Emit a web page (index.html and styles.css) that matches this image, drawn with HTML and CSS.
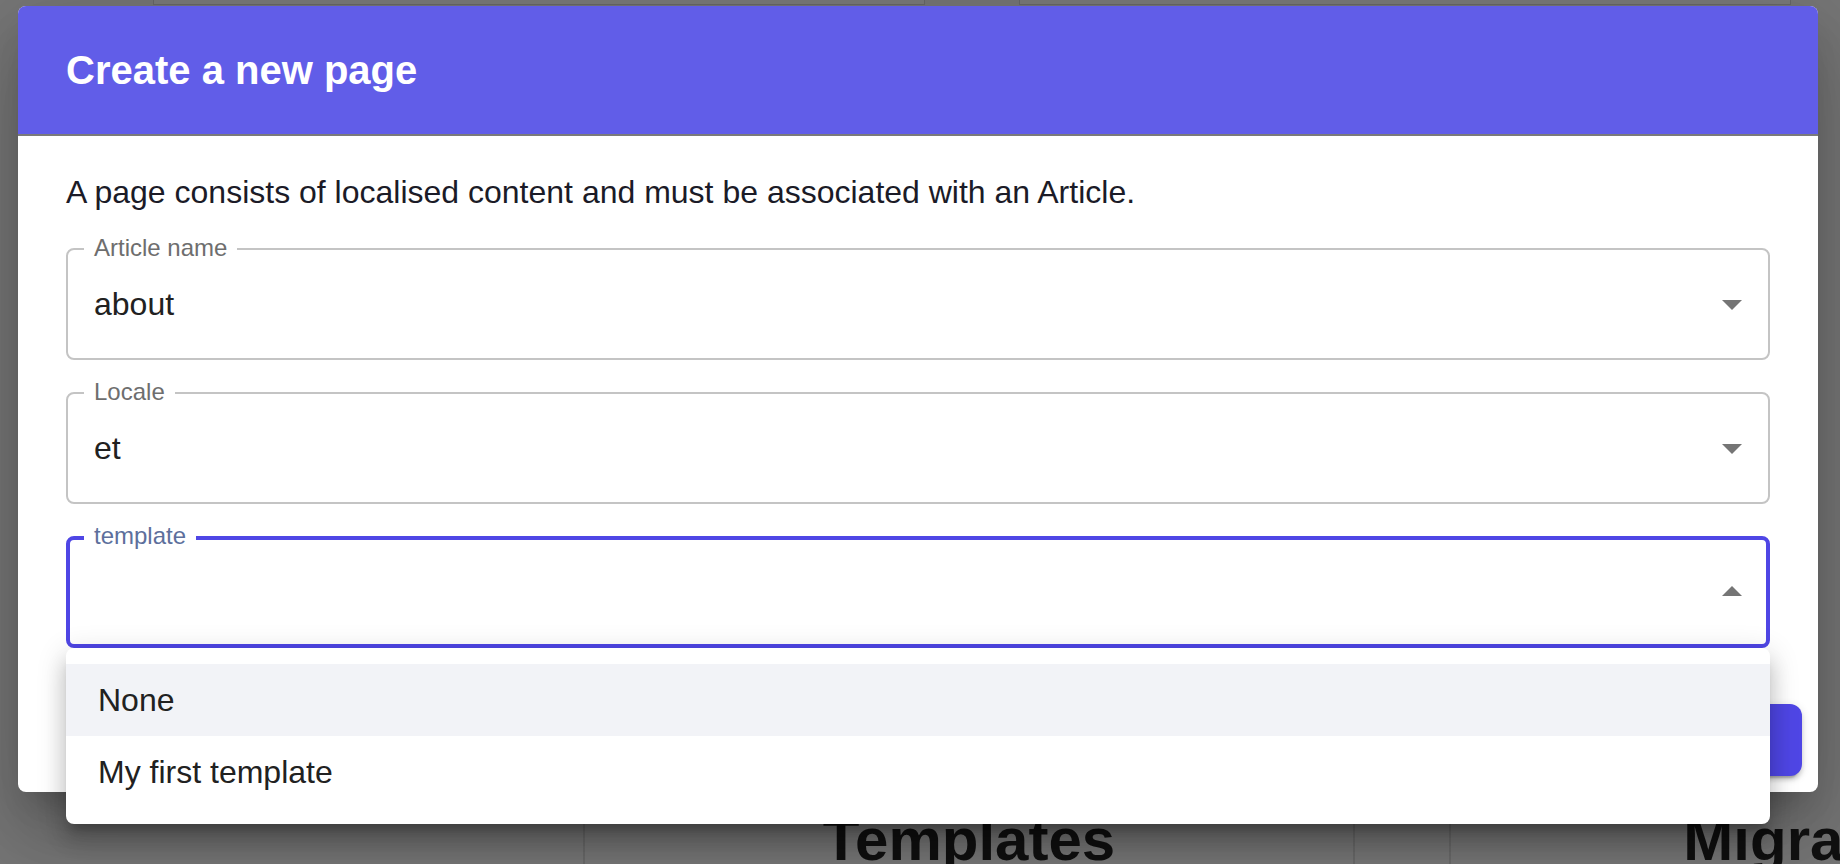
FILE: index.html
```html
<!DOCTYPE html>
<html lang="en">
<head>
<meta charset="utf-8">
<title>Create a new page</title>
<link rel="stylesheet" href="styles.css">
</head>
<body>
<div class="page">
  <div class="top-row">
    <div class="top-card"></div>
    <div class="top-card"></div>
  </div>
  <div class="bottom-row">
    <div class="card card-plain"></div>
    <div class="card"><h2 class="card-title">Templates</h2></div>
    <div class="card"><h2 class="card-title">Migrations</h2></div>
  </div>
</div>

<div class="modal">
  <div class="modal-header">
    <h1 class="modal-title">Create a new page</h1>
  </div>
  <div class="modal-content">
    <p class="desc">A page consists of localised content and must be associated with an Article.</p>
    <div class="field">
      <span class="label">Article name</span>
      <span class="value">about</span>
      <svg class="arrow" viewBox="0 0 24 24"><path d="M7 10l5 5 5-5z"/></svg>
    </div>
    <div class="field">
      <span class="label">Locale</span>
      <span class="value">et</span>
      <svg class="arrow" viewBox="0 0 24 24"><path d="M7 10l5 5 5-5z"/></svg>
    </div>
    <div class="field focused">
      <span class="label">template</span>
      <span class="value"></span>
      <svg class="arrow" viewBox="0 0 24 24"><path d="M7 14l5-5 5 5z"/></svg>
    </div>
  </div>
  <div class="modal-actions">
    <button class="btn">Create</button>
  </div>
</div>

<div class="menu">
  <div class="item active">None</div>
  <div class="item">My first template</div>
</div>
</body>
</html>
```
FILE: styles.css
```css
html, body {
  margin: 0;
  padding: 0;
}
body {
  width: 1840px;
  height: 864px;
  overflow: hidden;
  position: relative;
  background: #777777;
  font-family: "Liberation Sans", Arial, sans-serif;
}

/* dimmed page behind the dialog */
.page {
  height: 864px;
  display: flex;
  flex-direction: column;
}
.top-row {
  display: flex;
  gap: 94px;
  padding-left: 153px;
}
.top-card {
  width: 770px;
  height: 4px;
  background: #7b7b7b;
  border: 1px solid #686868;
  border-top: 0;
}
.bottom-row {
  margin-top: auto;
  display: flex;
  gap: 94px;
  margin-left: -283px;
  height: 164px;
}
.card {
  flex: none;
  width: 772px;
  box-sizing: border-box;
  border-left: 2px solid #6a6a6a;
  border-right: 2px solid #6a6a6a;
  padding-top: 106px;
}
.card.card-plain {
  border-color: transparent;
}
.card-title {
  margin: 0;
  text-align: center;
  font-size: 60px;
  line-height: 68px;
  font-weight: 700;
  color: #111111;
}

/* dialog */
.modal {
  position: absolute;
  left: 18px;
  top: 6px;
  width: 1800px;
  height: 786px;
  background: #ffffff;
  border-radius: 8px;
  display: flex;
  flex-direction: column;
  box-shadow: 0 22px 30px -14px rgba(0,0,0,0.2), 0 48px 76px 6px rgba(0,0,0,0.14), 0 18px 92px 16px rgba(0,0,0,0.12);
}
.modal-header {
  height: 128px;
  padding: 0 48px;
  display: flex;
  align-items: center;
  background: #615de8;
  border-radius: 8px 8px 0 0;
  border-bottom: 2px solid #7a7a7a;
}
.modal-title {
  margin: 0;
  color: #ffffff;
  font-size: 40px;
  line-height: 64px;
  font-weight: 700;
}
.modal-content {
  padding: 32px 48px 0;
  display: flex;
  flex-direction: column;
  gap: 32px;
}
.desc {
  margin: 0;
  font-size: 32px;
  line-height: 48px;
  color: #1b1b27;
}
.field {
  position: relative;
  height: 112px;
  box-sizing: border-box;
  border: 2px solid #c4c4c4;
  border-radius: 8px;
  display: flex;
  align-items: center;
  padding: 0 12px 0 26px;
}
.field.focused {
  border: 4px solid #4f46e5;
  padding: 0 10px 0 24px;
}
.label {
  position: absolute;
  left: 16px;
  top: -14px;
  padding: 0 10px;
  background: #ffffff;
  font-size: 24px;
  line-height: 24px;
  color: #6e6e6e;
}
.field.focused .label {
  left: 14px;
  top: -16px;
  color: #5d6f9c;
}
.value {
  flex: 1;
  font-size: 32px;
  line-height: 46px;
  color: #212121;
}
.arrow {
  flex: none;
  width: 48px;
  height: 48px;
  fill: #757575;
}
.modal-actions {
  margin-top: auto;
  padding: 16px;
  display: flex;
  justify-content: flex-end;
}
.btn {
  height: 72px;
  padding: 0 44px;
  border: 0;
  border-radius: 12px;
  background: #4f46e5;
  color: #ffffff;
  font-family: "Liberation Sans", Arial, sans-serif;
  font-size: 28px;
  font-weight: 700;
  box-shadow: 0 6px 2px -4px rgba(0,0,0,0.2), 0 4px 4px 0 rgba(0,0,0,0.14), 0 2px 10px 0 rgba(0,0,0,0.12);
}

/* open select menu */
.menu {
  position: absolute;
  left: 66px;
  top: 648px;
  width: 1704px;
  padding: 16px 0;
  background: #ffffff;
  border-radius: 8px;
  box-shadow: 0 10px 10px -6px rgba(0,0,0,0.2), 0 16px 20px 2px rgba(0,0,0,0.14), 0 6px 28px 4px rgba(0,0,0,0.12);
}
.item {
  height: 72px;
  line-height: 72px;
  padding: 0 32px;
  font-size: 32px;
  color: #212121;
}
.item.active {
  background: #f2f3f7;
}
```
